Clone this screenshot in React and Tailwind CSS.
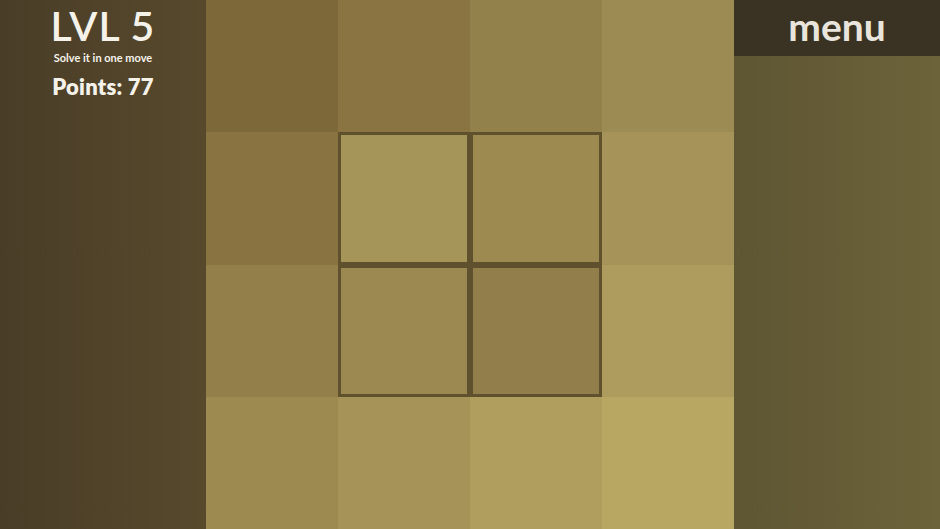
const cells = [
  ["#7d6839", "#8a7542", "#93814b", "#9c8b52"],
  ["#887341", "#a69558", "#9c8a51", "#a5935a"],
  ["#927f4a", "#9b8951", "#917e4a", "#ae9c5e"],
  ["#9d8a51", "#a69357", "#b09e5e", "#b8a763"],
];

const selected = ["1-1", "1-2", "2-1", "2-2"];

export default function App() {
  return (
    <div className="flex w-[940px] h-[529px] overflow-hidden font-['Lato','Noto_Sans',sans-serif] text-[#f5f2ea]">
      <aside className="w-[206px] shrink-0 flex flex-col items-center bg-gradient-to-r from-[#4a3d27] to-[#56492c]">
        <h1 className="text-[41px] leading-[40px] font-semibold mt-[6px] tracking-wide">LVL 5</h1>
        <p className="text-[11px] leading-none font-bold mt-[6px]">Solve it in one move</p>
        <p className="text-[22px] leading-none font-extrabold mt-[13px] tracking-[0.2px]">Points: 77</p>
      </aside>

      <main className="grid grid-cols-4 grid-rows-4 w-[528px] h-full shrink-0">
        {cells.map((row, r) =>
          row.map((c, i) => (
            <div
              key={`${r}-${i}`}
              className={selected.includes(`${r}-${i}`) ? "border-[3px] border-[#5f512d]" : ""}
              style={{ backgroundColor: c }}
            />
          ))
        )}
      </main>

      <aside className="flex-1 flex flex-col bg-gradient-to-r from-[#5e5533] to-[#6d633a]">
        <button className="h-[56px] w-full bg-[#3a3324] text-[39px] font-bold text-[#e9e5dc] leading-none pb-[3px]">
          menu
        </button>
      </aside>
    </div>
  );
}
